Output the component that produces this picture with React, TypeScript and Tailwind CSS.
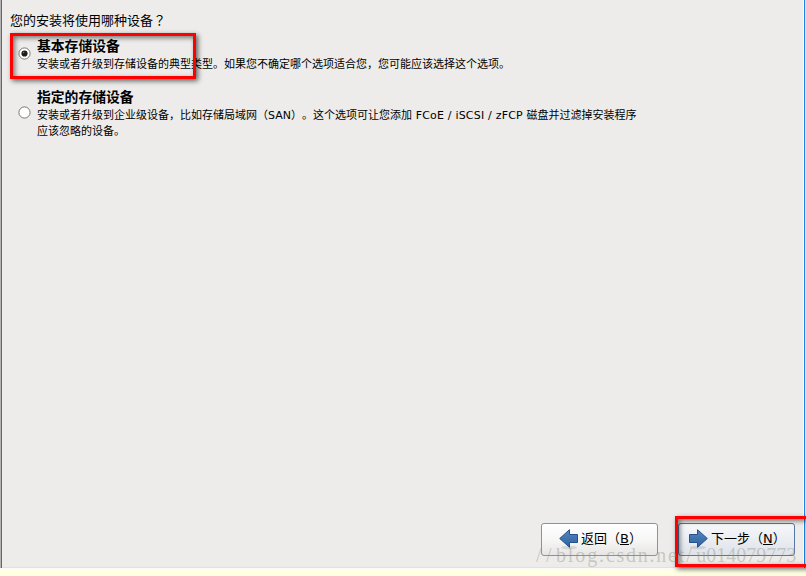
import { ReactNode } from 'react';

interface StorageOption {
  id: string;
  title: string;
  lines: ReactNode[];
}

const OPTIONS: StorageOption[] = [
  {
    id: 'basic',
    title: '基本存储设备',
    lines: ['安装或者升级到存储设备的典型类型。如果您不确定哪个选项适合您，您可能应该选择这个选项。'],
  },
  {
    id: 'specialized',
    title: '指定的存储设备',
    lines: [
      <>
        安装或者升级到企业级设备，比如存储局域网（SAN）。这个选项可让您添加
        <span className="tracking-[0.2px]"> FCoE / iSCSI / zFCP </span>
        磁盘并过滤掉安装程序
      </>,
      '应该忽略的设备。',
    ],
  },
];

function Radio({ checked }: { checked: boolean }) {
  return (
    <svg viewBox="0 0 13 13" className="-mt-[3px] w-[13px] h-[13px] flex-shrink-0">
      <circle cx="6.5" cy="6.5" r="5.6" fill="#fff" stroke="#777774" strokeWidth="1" />
      {checked && <circle cx="6.5" cy="6.5" r="3.1" fill="#1c1c1c" />}
      {checked && <circle cx="5.6" cy="5.5" r="0.8" fill="#777" />}
    </svg>
  );
}

function ArrowIcon({ direction }: { direction: 'left' | 'right' }) {
  return (
    <svg viewBox="0 0 20 21" className="mt-0.5 w-5 h-[21px] flex-shrink-0">
      <defs>
        <linearGradient id={`arrow-${direction}`} x1="0" y1="0" x2="0" y2="1">
          <stop offset="0" stopColor="#5586bf" />
          <stop offset="1" stopColor="#2d629f" />
        </linearGradient>
      </defs>
      <ellipse cx="10" cy="18.5" rx="8" ry="1.8" fill="#000" opacity="0.1" />
      <g transform={direction === 'right' ? 'translate(20 0) scale(-1 1)' : undefined}>
        <path
          d="M0.7 9.5 L10.5 0.7 V5.5 H18.5 V13.5 H10.5 V18.3 Z"
          fill={`url(#arrow-${direction})`}
          stroke="#25508a"
          strokeWidth="1"
          strokeLinejoin="round"
        />
      </g>
    </svg>
  );
}

function OptionRow({ option, checked }: { option: StorageOption; checked: boolean }) {
  return (
    <div className="flex items-center">
      <Radio checked={checked} />
      <div className="ml-1.5 whitespace-nowrap">
        <div className="mb-0.5 text-[13.8px] leading-[18px] font-bold">{option.title}</div>
        {option.lines.map((line, index) => (
          <div key={index} className="text-[11px] leading-4">
            {line}
          </div>
        ))}
      </div>
    </div>
  );
}

function NavButton({ primary, children }: { primary?: boolean; children: ReactNode }) {
  return (
    <button
      className={`flex w-[117px] h-[33px] items-center rounded-[3px] border pb-0.5 text-[13px] whitespace-nowrap ${
        primary
          ? 'pl-[9px] border-[#5778a3] bg-linear-to-b from-[#f6f8fa] via-[#eaedf2] to-[#dfe3e9]'
          : 'pl-[17px] border-[#91918f] bg-linear-to-b from-white via-[#f7f7f6] to-[#e7e6e4]'
      }`}
    >
      {children}
    </button>
  );
}

export default function App() {
  return (
    <div className="relative w-[806px] h-[576px] overflow-hidden bg-[#ffffe1] text-black [text-spacing-trim:space-all] font-['DejaVu_Sans','Noto_Sans_CJK_SC',sans-serif]">
      <div className="flex h-[570px] border-b-2 border-b-[#fafafa]">
        <div className="w-px bg-[#b4b4b4]" />
        <div className="w-px bg-[#666]" />
        <main className="flex flex-1 flex-col bg-[#edecea] border-b border-b-[#e1e1df]">
          <h1 className="pl-2 pt-[11px] text-[13px] leading-[18px]">
            您的安装将使用哪种设备
            <span className="font-['Noto_Sans_CJK_TC',sans-serif]">？</span>
          </h1>
          <div className="flex flex-col gap-[15px] pl-4 pt-[7px]">
            {OPTIONS.map((option, index) => (
              <OptionRow key={option.id} option={option} checked={index === 0} />
            ))}
          </div>
          <div className="mt-auto flex justify-end gap-5 pr-2 pb-[11px]">
            <NavButton>
              <ArrowIcon direction="left" />
              <span className="ml-0.5">返回（<u>B</u>）</span>
            </NavButton>
            <NavButton primary>
              <ArrowIcon direction="right" />
              <span className="ml-[3px]">下一步（<u>N</u>）</span>
            </NavButton>
          </div>
        </main>
        <div className="w-px bg-white" />
        <div className="w-px bg-[#1683e0]" />
        <div className="w-px bg-[#d3e6f7]" />
      </div>

      {/* Highlight frames */}
      <div className="absolute left-[10px] top-[33px] w-[186px] h-[46px] border-3 border-[#f00] shadow-[2px_2px_5px_rgba(0,0,0,0.6),inset_2px_2px_5px_rgba(0,0,0,0.5)]" />
      <div className="absolute left-[675px] top-[516px] w-[134px] h-[51px] border-3 border-[#f00] shadow-[2px_2px_5px_rgba(0,0,0,0.6),inset_2px_2px_5px_rgba(0,0,0,0.5)]" />

      {/* Watermark */}
      <div className="absolute left-[536px] top-[543px] text-[20px] leading-6 text-[#8c8c82]/40 whitespace-nowrap font-['Liberation_Serif',serif]">
        <span className="tracking-[4.4px]">//</span>
        <span className="tracking-[1.9px]">blog.</span>
        <span className="tracking-[1.7px]">csdn.</span>
        <span className="tracking-[1.9px]">net</span>
        <span className="tracking-[4.4px]">/</span>
        <span>u014079773</span>
      </div>
    </div>
  );
}
